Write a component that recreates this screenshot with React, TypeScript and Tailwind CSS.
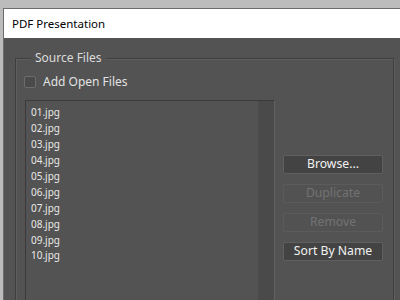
import React from "react";

const files = ["01.jpg","02.jpg","03.jpg","04.jpg","05.jpg","06.jpg","07.jpg","08.jpg","09.jpg","10.jpg"];

function Btn({ label, disabled }: { label: string; disabled?: boolean }) {
  return (
    <div
      className={
        "h-[19px] w-[100px] flex items-center justify-center rounded-[2px] border text-[12.2px] leading-none " +
        (disabled
          ? "bg-[#525252] border-[#5b5b5b] text-[#727272]"
          : "bg-[#434343] border-[#5f5f5f] text-[#f2f2f2]")
      }
    >
      {label}
    </div>
  );
}

export default function App() {
  return (
    <div
      className="w-[400px] h-[300px] overflow-hidden bg-[#bcbcbc] pl-[3px] pt-[8px]"
      style={{ fontFamily: '"Noto Sans", "Open Sans", sans-serif' }}
    >
      <div className="h-[300px] border-l border-t border-[#6c6c6c] flex flex-col">
        <div className="h-[29px] bg-white flex items-center pl-[8px] text-[11.5px] text-black shrink-0">
          PDF Presentation
        </div>
        <div className="flex-1 bg-[#535353] pl-[11px] pt-[20px] pr-[6px]">
          <div className="relative h-[260px] border border-[#3f3f3f] shadow-[inset_1px_1px_0_#5e5e5e,1px_1px_0_#5e5e5e]">
            <div className="absolute left-[15px] top-[-10px] bg-[#535353] px-[4px] text-[12px] leading-[18px] text-[#dcdcdc]">
              Source Files
            </div>
            <div className="flex items-center gap-[7px] pl-[8px] pt-[17px]">
              <div className="w-[12px] h-[12px] rounded-[2px] border border-[#6c6c6c] bg-[#4a4a4a]" />
              <div className="text-[12px] leading-none text-[#e2e2e2]">Add Open Files</div>
            </div>
            <div className="flex gap-[8px] pl-[9px] pt-[12px]">
              <div className="w-[250px] h-[220px] flex border-l border-t border-[#3b3b3b] border-r border-r-[#616161]">
                <div className="flex-1 pl-[5px] pt-[4px] flex flex-col">
                  {files.map((f) => (
                    <div key={f} className="h-[15.9px] flex items-center text-[10px] text-[#e8e8e8]">
                      {f}
                    </div>
                  ))}
                </div>
                <div className="w-[16px] bg-[#4a4a4a]" />
              </div>
              <div className="flex flex-col gap-[10px] pt-[55px]">
                <Btn label="Browse..." />
                <Btn label="Duplicate" disabled />
                <Btn label="Remove" disabled />
                <Btn label="Sort By Name" />
              </div>
            </div>
          </div>
        </div>
      </div>
    </div>
  );
}
